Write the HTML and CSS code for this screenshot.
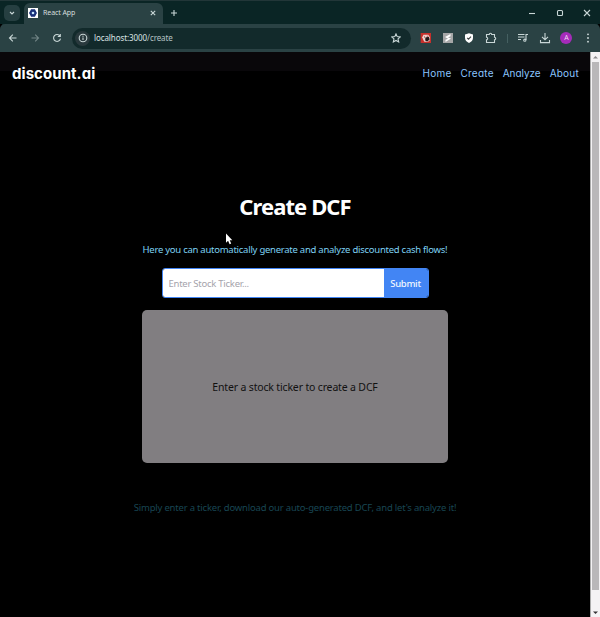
FILE: index.html
```html
<!DOCTYPE html>
<html lang="en">
<head>
<meta charset="utf-8">
<title>React App</title>
<link rel="stylesheet" href="styles.css">
</head>
<body>
<div class="browser">
  <div class="tabs">
    <div class="tab-search"><svg width="8" height="8" viewBox="0 0 8 8"><path d="M2 3l2 2 2-2"/></svg></div>
    <div class="tab">
      <svg class="favicon" width="10" height="10" viewBox="0 0 10 10"><rect width="10" height="10" fill="#fff"/><path d="M3.4 1.9h3.2L8.3 5 6.6 8.1H3.4L1.7 5z" fill="#172e78" stroke="#172e78"/><circle cx="5" cy="5" r="1.3" fill="#c5e5ff"/></svg>
      <span class="tab-title">React App</span>
      <svg class="close" width="8" height="8" viewBox="0 0 8 8"><path d="M1.8 1.8l4.4 4.4M6.2 1.8L1.8 6.2"/></svg>
    </div>
    <svg class="plus" width="8" height="8" viewBox="0 0 8 8"><path d="M4 1v6M1 4h6"/></svg>
    <div class="window-buttons">
      <svg width="8" height="8" viewBox="0 0 8 8"><path d="M1 4.5h6"/></svg>
      <svg width="8" height="8" viewBox="0 0 8 8"><rect x="1.5" y="1.5" width="5" height="5" rx="1"/></svg>
      <svg width="8" height="8" viewBox="0 0 8 8"><path d="M1 1l6 6M7 1L1 7"/></svg>
    </div>
  </div>
  <div class="toolbar">
    <svg class="back" width="10" height="10" viewBox="0 0 10 10"><path d="M8.5 5h-7M4.8 1.7L1.5 5l3.3 3.3"/></svg>
    <svg class="forward" width="10" height="10" viewBox="0 0 10 10"><path d="M1.5 5h7M5.2 1.7L8.5 5 5.2 8.3"/></svg>
    <svg class="reload" width="10" height="10" viewBox="0 0 10 10"><path d="M8 3A3.5 3.5 0 1 0 8.5 5.7M8.3 1v2.5H5.8"/></svg>
    <div class="address">
      <span class="info"><svg width="10" height="10" viewBox="0 0 10 10"><circle cx="5" cy="5" r="3.8"/><path d="M5 4.5V7M5 2.7v1"/></svg></span>
      <span class="url"><b>localhost:3000</b>/create</span>
      <svg class="star" width="10" height="10" viewBox="0 0 10 10"><path d="M5 .9l1.2 2.7 3 .3L7 5.9l.7 3L5 7.4 2.3 8.9l.7-3L.8 3.9l3-.3z"/></svg>
    </div>
    <div class="extensions">
      <svg width="12" height="12" viewBox="0 0 12 12"><g stroke="none"><rect x=".7" y="1" width="10.3" height="10" fill="#c6302c"/><path d="M2.2 5.2l1.3-2.4h4.8l1.6 2.4v3L8 9.8H4.4l-1.2-2z" fill="#ead3cf"/><path d="M5.4 5.4l3.4-.6.8 2.8-2.4 2-2-1z" fill="#24191b"/><path d="M4 4.5h1v1H4zM6.8 3.7h1v1h-1z" fill="#b02c2a"/></g></svg>
      <svg width="12" height="12" viewBox="0 0 12 12"><g stroke="none"><rect x="1" y="1" width="10" height="10" fill="#a6a7a8"/><path d="M3 5l5.5-3v2.2L6 5.5 9 6.6 3.5 10V7.8L6 6.7z" fill="#fff"/></g></svg>
      <svg width="12" height="12" viewBox="0 0 12 12"><path d="M6 1.2l4 1.4v3.2C10 8.2 8.4 10 6 11 3.6 10 2 8.2 2 5.8V2.6z" fill="#fff" stroke="none"/><path d="M4.2 5.9l1.3 1.3 2.5-2.6" stroke="#424546"/></svg>
      <svg width="12" height="12" viewBox="0 0 12 12"><path d="M1.5 2.5h2.8a1.2 1.2 0 0 1 2.4 0h2.8v2.8a1.2 1.2 0 0 1 0 2.4v2.8h-8V7.7a1.2 1.2 0 0 0 0-2.4z"/></svg>
      <i class="divider"></i>
      <svg width="12" height="12" viewBox="0 0 12 12"><path d="M1 2.5h6.5M1 5h6.5M1 7.5h3M9 8V2.5h2"/><circle cx="7.8" cy="8.2" r="1.1"/></svg>
      <svg width="12" height="12" viewBox="0 0 12 12"><path d="M6 1v6.5M3 4.8l3 3 3-3M1.5 8v2.6h9V8"/></svg>
      <span class="avatar">A</span>
      <svg width="12" height="12" viewBox="0 0 12 12"><g fill="#d5e0e0" stroke="none"><circle cx="6" cy="2.3" r=".9"/><circle cx="6" cy="6" r=".9"/><circle cx="6" cy="9.7" r=".9"/></g></svg>
    </div>
  </div>
  <div class="viewport">
    <div class="page">
      <nav class="nav">
        <a class="brand">discount.ai</a>
        <div class="links"><a class="home">Home</a><a class="create">Create</a><a class="analyze">Analyze</a><a class="about">About</a></div>
      </nav>
      <main>
        <h1>Create DCF</h1>
        <p class="lead">Here you can automatically generate and analyze discounted cash flows!</p>
        <form class="ticker"><input type="text" placeholder="Enter Stock Ticker..."><button type="button">Submit</button></form>
        <section class="card"><span>Enter a stock ticker to create a DCF</span></section>
        <p class="hint">Simply enter a ticker, download our auto-generated DCF, and let's analyze it!</p>
      </main>
    </div>
    <div class="scrollbar">
      <svg width="9" height="10" viewBox="0 0 9 10"><path d="M2 6.5L4.5 4 7 6.5z" fill="#8b898b"/></svg>
      <div class="thumb"></div>
      <svg width="9" height="27" viewBox="0 0 9 27"><path d="M2 21.5h5L4.5 24z" fill="#343234"/></svg>
    </div>
  </div>
  <svg class="cursor" width="8" height="12" viewBox="0 0 8 12"><path d="M1 .5v9.2l2.1-1.9 1.5 3.5 1.6-.7-1.5-3.4h2.6z" fill="#fff"/></svg>
</div>
</body>
</html>
```

FILE: styles.css
```css
* { box-sizing: border-box; }
body { margin: 0; background: #000; font-family: "Noto Sans", sans-serif; }
.browser { width: 600px; height: 617px; position: relative; display: flex; flex-direction: column; overflow: hidden; }
svg { display: block; flex: none; }
.tabs svg, .toolbar svg { fill: none; stroke: #c9d7d7; stroke-width: 1.1; }
.tabs { height: 24px; background: #0a2525; border-top: 1px solid #223638; display: flex; align-items: center; padding-left: 4px; }
.tab-search { width: 16px; height: 16px; border-radius: 5px; background: #263f41; display: grid; place-items: center; margin-right: 4px; }
.tab { width: 139px; height: 21px; align-self: flex-end; background: #2a4244; border-radius: 6px 6px 0 0; display: flex; align-items: center; padding: 0 6px 2px 4px; }
.tabs .favicon { stroke: none; }
.tab-title { font-size: 7px; line-height: 10px; color: #d6dfdf; margin: 1px 0 0 5px; letter-spacing: -.08px; }
.close { margin-left: auto; }
.plus { margin-left: 7px; }
.window-buttons { display: flex; gap: 19.5px; margin-left: auto; padding-right: 9px; }
.toolbar { height: 28px; background: #2a4244; display: flex; align-items: center; padding: 0 7px 0 8px; border-radius: 5px 5px 0 0; box-shadow: 0 -5px 0 -2px #0a2525; }
.tabs { position: relative; z-index: 1; }
.forward { margin-left: 12px; opacity: .45; }
.reload { margin-left: 12px; }
.address { width: 339px; height: 21px; background: #122a2b; border-radius: 11px; margin-left: 10px; display: flex; align-items: center; padding: 0 10px 0 3px; }
.info { width: 15px; height: 15px; border-radius: 50%; background: #29393d; display: grid; place-items: center; }
.url { font-size: 8px; line-height: 11px; color: #b5c3c4; margin: -1px 0 0 4px; letter-spacing: -.09px; }
.url b { color: #dbe4e4; font-weight: 400; }
.star { margin-left: auto; }
.extensions { flex: 1; display: flex; align-items: center; justify-content: space-between; padding-left: 9px; }
.divider { width: 1px; height: 9px; background: #456061; }
.avatar { width: 12px; height: 12px; border-radius: 50%; background: #a52bba; color: #f0d9f4; font: 7px/12px "Noto Sans", sans-serif; text-align: center; }
.extensions svg:last-child { margin-right: -1px; }
.viewport { flex: 1; display: flex; }
.page { flex: 1; background: linear-gradient(#09070a 19px, #000 19px); }
.nav { height: 43px; padding: 0 11px 0 12px; display: flex; align-items: center; justify-content: space-between; font-family: Inter, sans-serif; font-feature-settings: "cv11", "ss03"; }
.brand { font-size: 15px; font-weight: 700; color: #fff; letter-spacing: .06px; }
.links { display: flex; gap: 9px; margin-top: -1px; font-size: 10px; color: #8bc5ff; }
.home, .create, .about { letter-spacing: .23px; }
.analyze { letter-spacing: -.05px; }
main { display: flex; flex-direction: column; align-items: center; }
h1 { margin: 95px 0 0; font: 700 22px/32px "Noto Sans", sans-serif; color: #fff; letter-spacing: -.9px; }
.lead, .hint { margin: 0; white-space: nowrap; line-height: 14px; }
.lead { margin-top: 21px; font-size: 9.5px; color: #7ed2f4; letter-spacing: -.255px; }
.ticker { width: 267px; height: 30px; margin: 11px 0 12px; display: flex; border: 1px solid #4285f4; border-radius: 3px; overflow: hidden; }
input { flex: 1; min-width: 0; border: 0; padding: 0 6px; background: #fff; font: 9.5px "Noto Sans", sans-serif; letter-spacing: -.25px; }
input::placeholder { color: #a5a3ab; opacity: 1; }
button { width: 44px; padding: 0; border: 0; background: #4285f4; color: #f1f7ff; font: 500 9.5px "Noto Sans", sans-serif; letter-spacing: -.3px; }
.card { width: 306px; height: 153px; border-radius: 5px; background: #817e81; display: grid; place-items: center; font-size: 10.5px; color: #111; letter-spacing: -.16px; }
.hint { margin-top: 38px; font-size: 9.5px; color: #184653; letter-spacing: -.2px; }
.scrollbar { width: 10px; border-left: 1px solid #aaa; background: #f4f2f4; display: flex; flex-direction: column; align-items: center; }
.thumb { width: 7px; flex: 1; background: #b9b7b9; }
.cursor { position: absolute; left: 225px; top: 233px; }
```
